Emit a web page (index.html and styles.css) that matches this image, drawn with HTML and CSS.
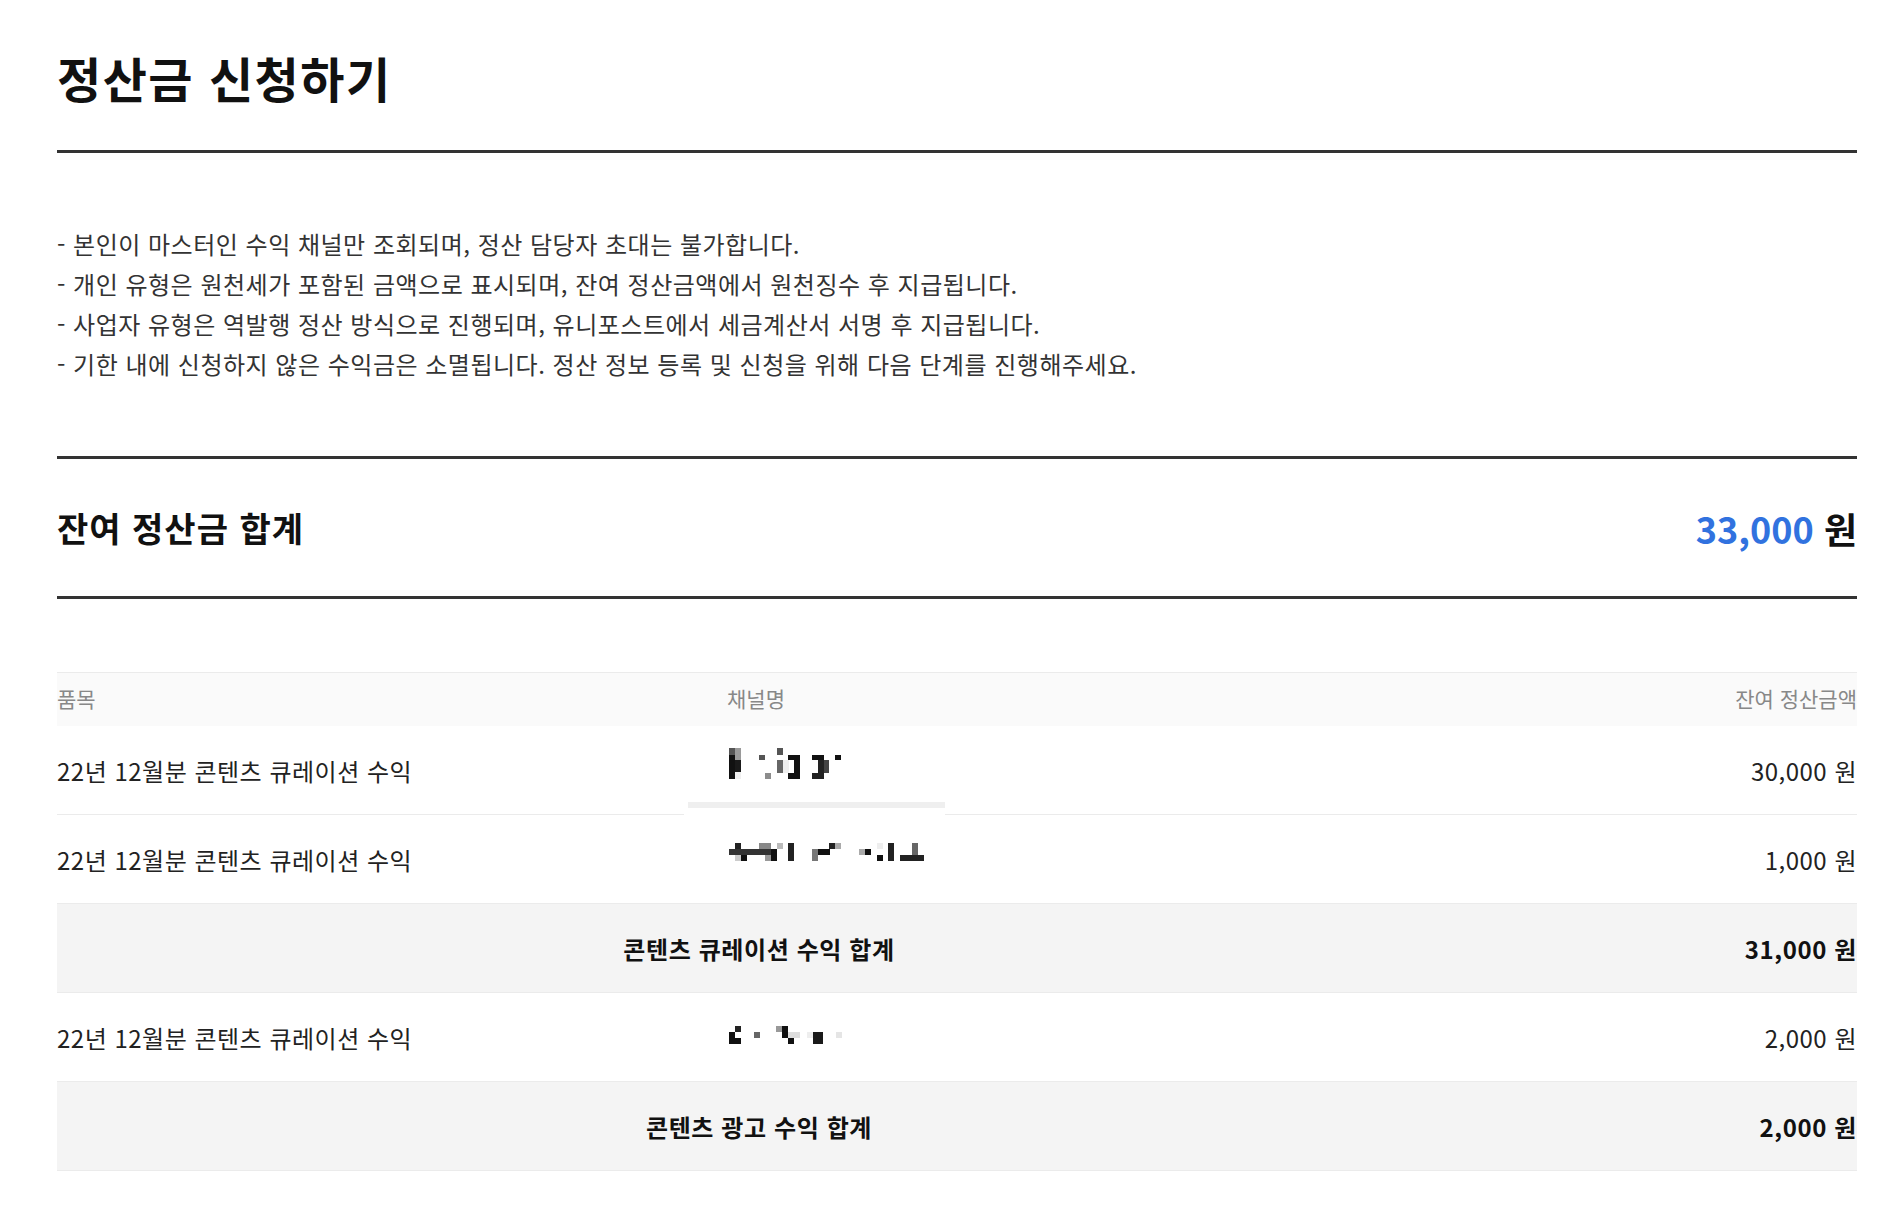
FILE: index.html
```html
<!DOCTYPE html>
<html lang="ko">
<head>
<meta charset="utf-8">
<title>정산금 신청하기</title>
<link rel="stylesheet" href="styles.css">
</head>
<body>
<main class="page">
  <h1 class="title">정산금 신청하기</h1>

  <ul class="notes">
    <li>- 본인이 마스터인 수익 채널만 조회되며, 정산 담당자 초대는 불가합니다.</li>
    <li>- 개인 유형은 원천세가 포함된 금액으로 표시되며, 잔여 정산금액에서 원천징수 후 지급됩니다.</li>
    <li>- 사업자 유형은 역발행 정산 방식으로 진행되며, 유니포스트에서 세금계산서 서명 후 지급됩니다.</li>
    <li>- 기한 내에 신청하지 않은 수익금은 소멸됩니다. 정산 정보 등록 및 신청을 위해 다음 단계를 진행해주세요.</li>
  </ul>

  <section class="summary">
    <h2 class="summary-label">잔여 정산금 합계</h2>
    <p class="summary-amount"><span class="summary-num">33,000</span> 원</p>
  </section>

  <div class="table">
    <div class="row head">
      <div class="cell">품목</div>
      <div class="cell">채널명</div>
      <div class="cell right">잔여 정산금액</div>
    </div>

    <div class="row item">
      <div class="cell">22년 12월분 콘텐츠 큐레이션 수익</div>
      <div class="cell channel">
        <svg class="mosaic m1" width="112" height="31" viewBox="0 0 112 31" shape-rendering="crispEdges">
          <rect x="0" y="0" width="6" height="7" fill="#555"/>
          <rect x="6" y="0" width="6" height="12" fill="#9a9a9a"/>
          <rect x="0" y="7" width="6" height="24" fill="#111"/>
          <rect x="6" y="12" width="6" height="12" fill="#1a1a1a"/>
          <rect x="6" y="24" width="6" height="7" fill="#f0f0f0"/>
          <rect x="30" y="7" width="6" height="5" fill="#555"/>
          <rect x="36" y="25" width="6" height="6" fill="#8c8c8c"/>
          <rect x="48" y="0" width="6" height="7" fill="#555"/>
          <rect x="48" y="12" width="6" height="13" fill="#666"/>
          <rect x="54" y="12" width="6" height="13" fill="#eee"/>
          <rect x="59" y="7" width="12" height="5" fill="#111"/>
          <rect x="65" y="7" width="6" height="24" fill="#111"/>
          <rect x="59" y="25" width="12" height="6" fill="#111"/>
          <rect x="83" y="7" width="12" height="5" fill="#111"/>
          <rect x="89" y="12" width="6" height="13" fill="#222"/>
          <rect x="95" y="12" width="5" height="13" fill="#444"/>
          <rect x="83" y="25" width="12" height="6" fill="#222"/>
          <rect x="106" y="7" width="6" height="5" fill="#111"/>
        </svg>
        <div class="scrollbar"></div>
      </div>
      <div class="cell right">30,000 원</div>
    </div>

    <div class="row item">
      <div class="cell">22년 12월분 콘텐츠 큐레이션 수익</div>
      <div class="cell channel">
        <svg class="mosaic m2" width="195" height="18" viewBox="0 0 195 18" shape-rendering="crispEdges">
          <rect x="0" y="6" width="48" height="6" fill="#333"/>
          <rect x="6" y="0" width="6" height="6" fill="#222"/>
          <rect x="30" y="0" width="12" height="6" fill="#888"/>
          <rect x="48" y="0" width="6" height="6" fill="#bbb"/>
          <rect x="6" y="12" width="6" height="6" fill="#ccc"/>
          <rect x="12" y="12" width="6" height="6" fill="#111"/>
          <rect x="36" y="12" width="6" height="6" fill="#999"/>
          <rect x="42" y="6" width="6" height="12" fill="#111"/>
          <rect x="59" y="0" width="6" height="18" fill="#222"/>
          <rect x="83" y="6" width="6" height="12" fill="#777"/>
          <rect x="89" y="6" width="12" height="6" fill="#111"/>
          <rect x="100" y="0" width="6" height="6" fill="#222"/>
          <rect x="106" y="0" width="6" height="6" fill="#aaa"/>
          <rect x="130" y="6" width="6" height="6" fill="#aaa"/>
          <rect x="136" y="6" width="6" height="6" fill="#111"/>
          <rect x="148" y="0" width="6" height="6" fill="#eee"/>
          <rect x="148" y="12" width="6" height="6" fill="#111"/>
          <rect x="159" y="0" width="6" height="18" fill="#222"/>
          <rect x="171" y="12" width="24" height="6" fill="#222"/>
          <rect x="183" y="0" width="6" height="12" fill="#666"/>
        </svg>
      </div>
      <div class="cell right">1,000 원</div>
    </div>

    <div class="row total">
      <div class="cell span2">콘텐츠 큐레이션 수익 합계</div>
      <div class="cell right">31,000 원</div>
    </div>

    <div class="row item">
      <div class="cell">22년 12월분 콘텐츠 큐레이션 수익</div>
      <div class="cell channel">
        <svg class="mosaic m3" width="114" height="18" viewBox="0 0 114 18" shape-rendering="crispEdges">
          <rect x="0" y="6" width="6" height="12" fill="#111"/>
          <rect x="6" y="12" width="6" height="6" fill="#111"/>
          <rect x="6" y="0" width="6" height="6" fill="#222"/>
          <rect x="25" y="6" width="6" height="6" fill="#666"/>
          <rect x="47" y="0" width="6" height="6" fill="#999"/>
          <rect x="53" y="0" width="6" height="12" fill="#111"/>
          <rect x="59" y="12" width="6" height="6" fill="#111"/>
          <rect x="59" y="6" width="12" height="6" fill="#ddd"/>
          <rect x="78" y="6" width="6" height="6" fill="#eee"/>
          <rect x="84" y="6" width="10" height="12" fill="#1a1a1a"/>
          <rect x="107" y="6" width="6" height="6" fill="#e5e5e5"/>
        </svg>
      </div>
      <div class="cell right">2,000 원</div>
    </div>

    <div class="row total">
      <div class="cell span2">콘텐츠 광고 수익 합계</div>
      <div class="cell right">2,000 원</div>
    </div>
  </div>
</main>
</body>
</html>
```
FILE: styles.css
```css
* {
  box-sizing: border-box;
}

html, body {
  margin: 0;
  padding: 0;
  background: #fff;
}

body {
  font-family: "Noto Sans CJK KR", "Noto Sans", sans-serif;
  color: #222;
}

.page {
  padding: 0 41px 0 57px;
}

.title {
  margin: 0;
  padding: 49px 0 45px;
  font-size: 48px;
  line-height: 56px;
  font-weight: 700;
  color: #111;
  letter-spacing: 1.5px;
  border-bottom: 3px solid #333;
}

.notes {
  list-style: none;
  margin: 0;
  padding: 71px 0 72px;
  font-size: 24px;
  line-height: 40px;
  letter-spacing: 0.5px;
  color: #333;
  border-bottom: 3px solid #333;
}

.summary {
  display: flex;
  align-items: center;
  justify-content: space-between;
  height: 140px;
  border-bottom: 3px solid #333;
}

.summary-label {
  margin: 0;
  font-size: 34px;
  line-height: 44px;
  letter-spacing: 1px;
  font-weight: 700;
  color: #111;
}

.summary-amount {
  margin: 0;
  font-size: 36px;
  line-height: 44px;
  font-weight: 700;
  color: #111;
}

.summary-num {
  color: #3172df;
}

.table {
  margin-top: 73px;
  border-top: 1px solid #ebebeb;
}

.row {
  display: grid;
  grid-template-columns: 670px 734px 1fr;
  align-items: center;
  border-bottom: 1px solid #ebebeb;
  font-size: 24px;
  letter-spacing: 0.5px;
  color: #222;
}

.row.head {
  height: 53px;
  padding-bottom: 4px;
  background: #fafafa;
  border-bottom: none;
  font-size: 21px;
  letter-spacing: 0;
  color: #888;
}

.row.item {
  height: 89px;
}

.row.total {
  height: 89px;
  background: #f4f4f4;
  font-weight: 700;
  letter-spacing: 0.6px;
  color: #111;
}

.cell.right {
  text-align: right;
}

.cell.span2 {
  grid-column: 1 / span 2;
  text-align: center;
}

.channel {
  position: relative;
  align-self: stretch;
  display: flex;
  align-items: center;
}

.mosaic {
  display: block;
  margin-left: 2px;
}

.m1 {
  margin-bottom: 13px;
}

.m2 {
  margin-bottom: 14px;
}

.m3 {
  margin-bottom: 4px;
}

.scrollbar {
  position: absolute;
  left: -43px;
  top: 76px;
  width: 261px;
  height: 21px;
  background: #fff;
  z-index: 1;
}

.scrollbar::before {
  content: "";
  position: absolute;
  left: 4px;
  top: 0;
  width: 257px;
  height: 6px;
  background: #efefef;
}
```
